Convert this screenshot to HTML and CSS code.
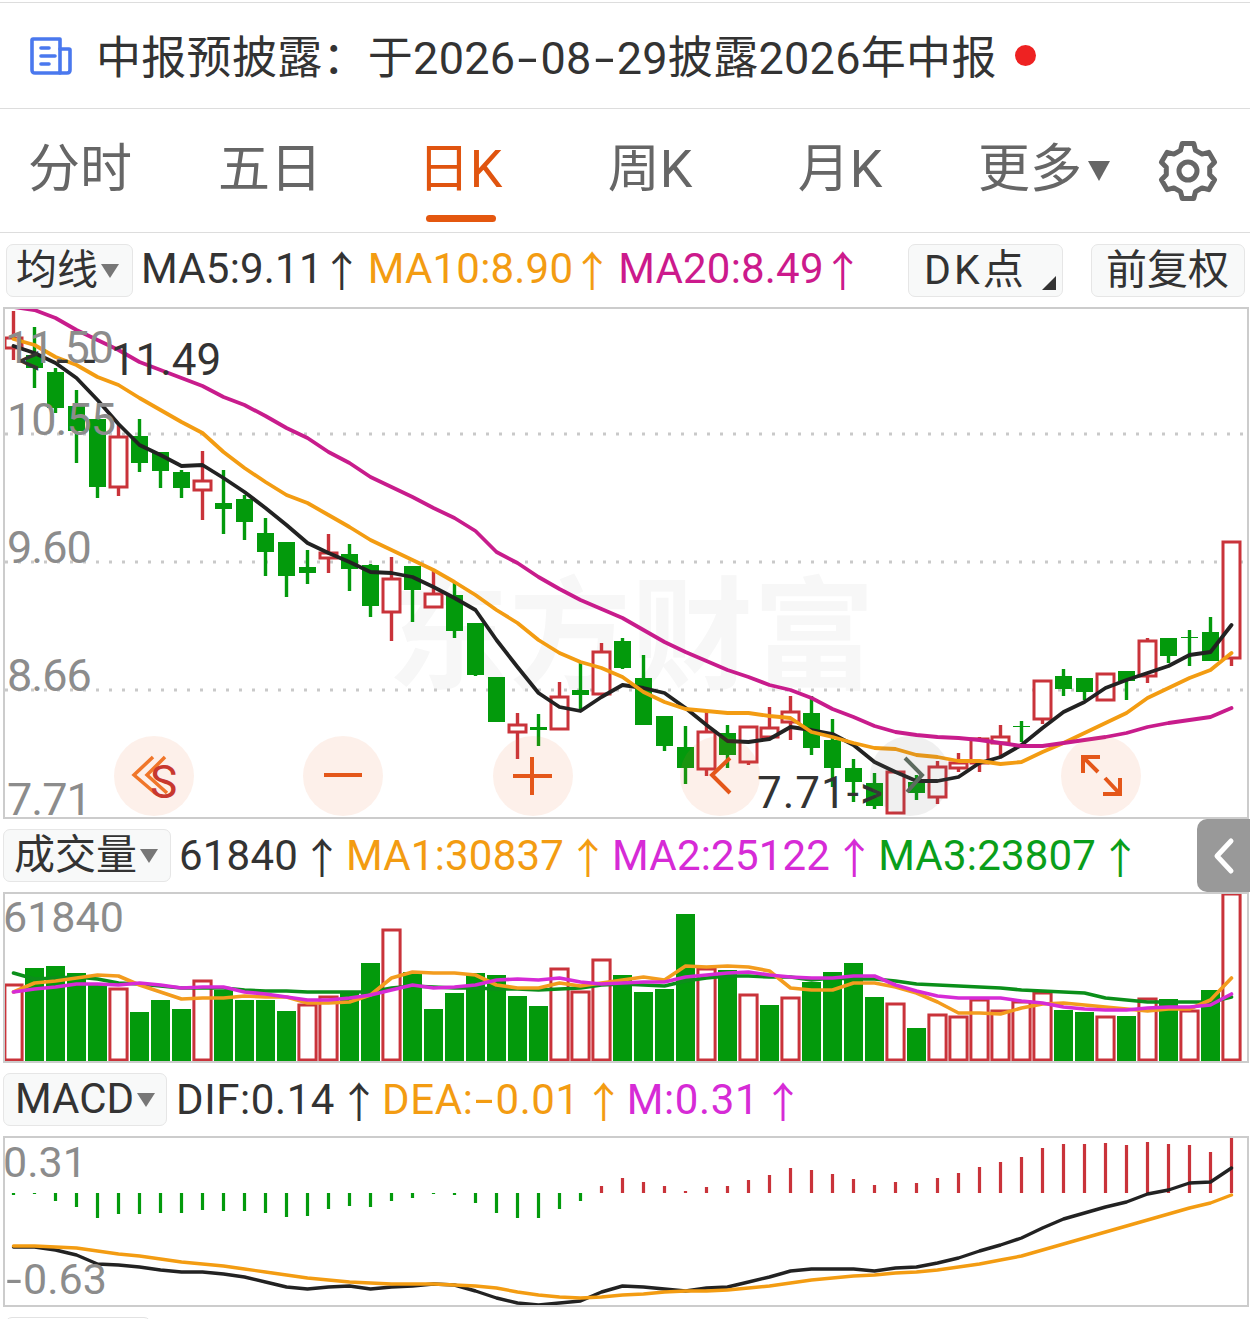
FILE: index.html
```html
<!DOCTYPE html>
<html lang="zh-CN">
<head>
  <meta charset="UTF-8">
  <meta name="viewport" content="width=device-width, initial-scale=1.0">
  <title>日K</title>
  <link rel="stylesheet" href="styles.css">
</head>
<body>
  <div class="notice">
    <svg class="doc-icon" viewBox="0 0 42 40" fill="none" stroke="#4a78ee" stroke-width="3.6" stroke-linejoin="round" stroke-linecap="round">
      <path d="M3 3 H30 V37 H5 Q2 37 2 34 V4 Q2 3 3 3 Z"/>
      <path d="M30 13 H39 Q40 13 40 14 V34 Q40 37 37 37 H30"/>
      <path d="M11 12 H19 M11 20 H25 M11 28 H19"/>
    </svg>
    <span class="notice-text">中报预披露：于2026<span class="dash">-</span>08<span class="dash">-</span>29披露2026年中报</span>
    <span class="red-dot"></span>
  </div>

  <div class="tabs">
    <div class="tab">分时</div>
    <div class="tab">五日</div>
    <div class="tab active">日K</div>
    <div class="tab">周K</div>
    <div class="tab">月K</div>
    <div class="tab tab-more">更多<span class="caret caret-big"></span></div>
    <svg class="gear" viewBox="0 0 60 60" fill="none" stroke="#666" stroke-width="5" stroke-linejoin="round">
      <polygon points="22.5,9.3 24.2,2.6 35.8,2.6 37.5,9.3 44.1,13.1 50.8,11.3 56.6,21.3 51.7,26.2 51.7,33.8 56.6,38.7 50.8,48.7 44.1,46.9 37.5,50.7 35.8,57.4 24.2,57.4 22.5,50.7 15.9,46.9 9.2,48.7 3.4,38.7 8.3,33.8 8.3,26.2 3.4,21.3 9.2,11.3 15.9,13.1"/>
      <circle cx="30" cy="30" r="9"/>
    </svg>
  </div>

  <div class="toolbar toolbar-k">
    <div class="btn btn-ma">均线<span class="caret"></span></div>
    <span class="val c-black">MA5:9.11<i class="up">↑</i></span>
    <span class="val c-orange">MA10:8.90<i class="up">↑</i></span>
    <span class="val c-rose">MA20:8.49<i class="up">↑</i></span>
    <div class="btn btn-dk">DK点<span class="corner"></span></div>
    <div class="btn btn-fq">前复权</div>
  </div>

  <div class="chart chart-k">
    <span class="watermark">东方财富</span>
    <svg id="kChart" class="plot" viewBox="5 309 1242 508"></svg>
    <span class="axis y-1150">11.50</span>
    <span class="axis y-1055">10.55</span>
    <span class="axis y-960">9.60</span>
    <span class="axis y-866">8.66</span>
    <span class="axis y-771">7.71</span>
    <span class="tip tip-high"><span class="tip-arrow">&lt;--</span>11.49</span>
    <span class="tip tip-low">7.71-&gt;</span>

    <div class="round round-s">
      <svg viewBox="0 0 80 80" fill="none" stroke="#f0762a" stroke-width="3.5">
        <path d="M39 21 L20 39 L41 57 M51 21 L33 39 L53 57"/>
      </svg>
      <span class="s-letter">S</span>
    </div>
    <div class="round round-minus">
      <svg viewBox="0 0 80 80" fill="none" stroke="#e4571a" stroke-width="4"><path d="M21 39 H59"/></svg>
    </div>
    <div class="round round-plus">
      <svg viewBox="0 0 80 80" fill="none" stroke="#e4571a" stroke-width="4"><path d="M20 40 H59 M39 21 V59"/></svg>
    </div>
    <div class="round round-left">
      <svg viewBox="0 0 80 80" fill="none" stroke="#e4571a" stroke-width="4"><path d="M50 22 L32 39 L50 57"/></svg>
    </div>
    <div class="round round-right off">
      <svg viewBox="0 0 80 80" fill="none" stroke="#5d6b60" stroke-width="4"><path d="M35 22 L52 39 L37 56"/></svg>
    </div>
    <div class="round round-expand">
      <svg viewBox="0 0 80 80" fill="none" stroke="#e4571a" stroke-width="4"><path d="M39 21 H22 V37 M22 21 L37 36 M59 42 V58 H42 M59 58 L44 42"/></svg>
    </div>
  </div>

  <div class="toolbar toolbar-vol">
    <div class="btn btn-vol">成交量<span class="caret"></span></div>
    <span class="val c-black">61840<i class="up">↑</i></span>
    <span class="val c-orange">MA1:30837<i class="up">↑</i></span>
    <span class="val c-purple">MA2:25122<i class="up">↑</i></span>
    <span class="val c-green">MA3:23807<i class="up">↑</i></span>
    <div class="collapse">
      <svg viewBox="0 0 30 40" fill="none" stroke="#fff" stroke-width="5" stroke-linecap="round" stroke-linejoin="round"><path d="M22 5 L8 20 L22 35"/></svg>
    </div>
  </div>

  <div class="chart chart-sub">
    <svg id="volChart" class="plot" viewBox="5 894 1242 167"></svg>
    <span class="axis a-vol">61840</span>
  </div>

  <div class="toolbar toolbar-macd">
    <div class="btn btn-macd">MACD<span class="caret"></span></div>
    <span class="val c-black">DIF:0.14<i class="up">↑</i></span>
    <span class="val c-orange">DEA:<span class="dash">-</span>0.01<i class="up">↑</i></span>
    <span class="val c-purple">M:0.31<i class="up">↑</i></span>
  </div>

  <div class="chart chart-sub">
    <svg id="macdChart" class="plot" viewBox="5 1138 1242 167"></svg>
    <span class="axis a-macd-top">0.31</span>
    <span class="axis a-macd-low"><span class="dash">-</span>0.63</span>
  </div>

  <div class="next-btn"></div>

  <script src="chart.js"></script>
</body>
</html>
```

FILE: styles.css
```css
* { box-sizing: border-box; }
html, body { margin: 0; padding: 0; background: #fff; }
body {
  width: 1250px;
  height: 1319px;
  overflow: hidden;
  font-family: Roboto, "Noto Sans CJK SC", sans-serif;
  color: #333;
}

/* notice row */
.notice {
  display: flex;
  align-items: center;
  height: 107px;
  margin-top: 2px;
  padding-left: 30px;
  border-top: 1px solid #ddd;
  border-bottom: 1px solid #ddd;
}
.doc-icon { width: 42px; height: 40px; flex: none; }
.notice-text { margin-left: 24px; padding-bottom: 2px; font-size: 45px; letter-spacing: 0.3px; color: #333; white-space: nowrap; }
.dash { display: inline-block; width: 25px; text-align: center; transform: scaleX(1.6); letter-spacing: 0; }
.red-dot { width: 21px; height: 21px; margin-left: 18px; border-radius: 50%; background: #ee2222; }

/* period tabs */
.tabs {
  display: flex;
  align-items: center;
  height: 124px;
  border-bottom: 1px solid #ddd;
  overflow: hidden;
}
.tab {
  position: relative;
  display: flex;
  flex: 0 0 190px;
  justify-content: center;
  align-items: center;
  height: 100%;
  padding-bottom: 12px;
  font-size: 52px;
  color: #666;
}
.tab:first-child { margin-left: -15px; }
.tab.active { color: #e0540f; }
.tab.active::after {
  content: "";
  position: absolute;
  left: 61px;
  top: 106px;
  width: 70px;
  height: 7px;
  border-radius: 4px;
  background: #e4570f;
}
.tab-more { justify-content: flex-start; padding-left: 43px; }
.gear { width: 60px; height: 60px; flex: none; margin-left: 33px; }

.caret {
  flex: none;
  width: 0;
  height: 0;
  border-left: 9px solid transparent;
  border-right: 9px solid transparent;
  border-top: 14px solid #777;
}
.caret-big {
  margin-left: 6px;
  margin-top: 12px;
  border-left-width: 11px;
  border-right-width: 11px;
  border-top-width: 20px;
  border-top-color: #666;
}

/* indicator rows */
.toolbar {
  position: relative;
  display: flex;
  align-items: center;
  height: 73px;
  white-space: nowrap;
}
.toolbar-k { height: 74px; padding: 0 5px 0 6px; }
.toolbar-vol, .toolbar-macd { padding-left: 3px; }
.btn {
  position: relative;
  display: flex;
  flex: none;
  align-items: center;
  height: 53px;
  padding-bottom: 9px;
  border: 1px solid #e6e6e6;
  border-radius: 7px;
  background: #f8f9f9;
  font-size: 41px;
  color: #333;
}
.btn .caret { margin-left: 3px; margin-top: 10px; }
.btn-ma { width: 127px; padding-left: 9px; margin-right: 8px; }
.btn-vol { width: 168px; padding-left: 10px; margin-right: 8px; }
.btn-macd { width: 164px; padding-left: 11px; padding-bottom: 3px; margin-right: 9px; font-size: 42px; }
.btn-macd .caret { margin-top: 4px; }
.btn-dk { width: 155px; margin-left: auto; padding-left: 15px; letter-spacing: 3px; }
.btn-fq { width: 154px; margin-left: 28px; padding-left: 14px; }
.corner {
  position: absolute;
  right: 6px;
  bottom: 6px;
  width: 0;
  height: 0;
  border-left: 14px solid transparent;
  border-bottom: 14px solid #333;
}

.val { display: inline-flex; flex: none; align-items: center; margin-right: 3px; font-size: 42px; letter-spacing: 0.2px; }
.up {
  display: inline-block;
  width: 42px;
  margin-left: 3px;
  font-style: normal;
  font-family: "Noto Sans CJK SC", sans-serif;
  font-size: 42px;
  line-height: 1;
  letter-spacing: 0;
}
.toolbar-k .val { margin-right: 5px; margin-bottom: 3px; }
.toolbar-k .up { margin-left: -2px; }
.toolbar-macd .val { margin-right: 2px; letter-spacing: 0.6px; }
.toolbar-macd .dash { width: 22px; }
.c-black { color: #333; }
.c-orange { color: #f39c12; }
.c-rose { color: #cc1a8c; }
.c-purple { color: #d62bd6; }
.c-green { color: #0a9e1a; }

.collapse {
  position: absolute;
  right: 0;
  top: 0;
  display: flex;
  align-items: center;
  justify-content: center;
  width: 53px;
  height: 73px;
  border-radius: 10px 0 0 10px;
  background: #999;
}
.collapse svg { width: 30px; height: 40px; }

/* charts */
.chart {
  position: relative;
  width: 1246px;
  margin-left: 3px;
  border: 2px solid #ccc;
}
.chart-k { height: 512px; }
.chart-sub { height: 171px; }
.plot { position: relative; display: block; width: 1242px; height: 100%; }

.watermark {
  position: absolute;
  left: 382px;
  top: 262px;
  font-size: 122px;
  font-weight: 700;
  line-height: 1.1;
  color: #f7f7f7;
  white-space: nowrap;
}
.axis {
  position: absolute;
  font-size: 45px;
  line-height: 1;
  letter-spacing: -1px;
  color: #8c8c8c;
}
.y-1150 { left: 0; top: 16px; }
.y-1055 { left: 2px; top: 88px; }
.y-960 { left: 2px; top: 216px; }
.y-866 { left: 2px; top: 344px; }
.y-771 { left: 2px; top: 474px; line-height: 34px; }
.a-vol { left: -2px; top: 2px; font-size: 43px; letter-spacing: 0; }
.a-macd-top { left: -2px; top: 3px; font-size: 43px; letter-spacing: 0; }
.a-macd-low { left: 0; top: 120px; font-size: 43px; letter-spacing: 0; }
.a-macd-low .dash { width: 18px; transform: scaleX(1.3); }

.tip {
  position: absolute;
  font-size: 44px;
  line-height: 1;
  color: #333;
  white-space: nowrap;
}
.tip-high { left: 14px; top: 29px; }
.tip-arrow { letter-spacing: 15px; }
.tip-low { left: 752px; top: 462px; letter-spacing: 1px; }

.round {
  position: absolute;
  top: 427px;
  width: 80px;
  height: 80px;
  border-radius: 50%;
  background: rgba(240, 110, 50, 0.1);
}
.round svg { display: block; width: 80px; height: 80px; }
.round.off { background: rgba(110, 110, 110, 0.1); }
.round-s { left: 109px; }
.round-minus { left: 298px; }
.round-plus { left: 488px; }
.round-left { left: 675px; }
.round-right { left: 865px; }
.round-expand { left: 1056px; }
.s-letter {
  position: absolute;
  left: 36px;
  top: 23px;
  font-size: 46px;
  line-height: 1;
  color: #c8382e;
}

.next-btn {
  width: 146px;
  height: 8px;
  margin: 10px 0 0 5px;
  border: 1px solid #e2e2e2;
  border-radius: 7px 7px 0 0;
}
```

FILE: chart.js
```js
// candle x positions: 21px apart from the left edge of the plot
const stepX = i => 13.5 + 21 * i;
const RED = "#c9333a";
const GREEN = "#039a0c";

// [high, bodyTop, bodyBottom, low, up?]
const candles = [
  [311, 338, 348, 360, 1], [327, 355, 368, 388, 0], [368, 372, 408, 413, 0], [390, 406, 431, 463, 0],
  [419, 419, 487, 498, 0], [425, 437, 487, 496, 1], [419, 436, 463, 472, 0], [452, 452, 471, 488, 0],
  [470, 472, 488, 498, 0], [451, 481, 490, 520, 1], [470, 503, 509, 534, 0], [495, 499, 522, 540, 0],
  [518, 533, 552, 576, 0], [542, 542, 576, 597, 0], [550, 567, 573, 584, 0], [534, 553, 558, 573, 1],
  [544, 554, 569, 591, 0], [564, 565, 606, 617, 0], [557, 579, 612, 641, 1], [566, 566, 590, 622, 0],
  [570, 594, 607, 607, 1], [582, 595, 631, 638, 0], [623, 623, 675, 676, 0], [677, 677, 722, 722, 0],
  [713, 725, 732, 759, 1], [714, 727, 730, 746, 0], [682, 697, 729, 729, 1], [663, 690, 695, 709, 0],
  [643, 652, 694, 694, 1], [638, 641, 668, 669, 0], [655, 678, 725, 725, 0], [716, 716, 746, 751, 0],
  [726, 747, 768, 784, 0], [710, 732, 769, 776, 1], [725, 733, 755, 768, 0], [727, 727, 762, 765, 1],
  [707, 728, 737, 737, 1], [696, 712, 722, 740, 1], [696, 713, 748, 755, 0], [719, 740, 768, 787, 0],
  [759, 768, 782, 802, 0], [773, 783, 806, 809, 0], [772, 772, 813, 813, 1], [775, 782, 793, 800, 0],
  [761, 767, 797, 804, 1], [753, 763, 768, 772, 1], [737, 739, 763, 772, 1], [725, 737, 743, 757, 1],
  [721, 726, 727, 742, 0], [681, 681, 719, 724, 1], [669, 676, 689, 696, 0], [678, 678, 692, 700, 0],
  [674, 674, 700, 701, 1], [671, 671, 681, 700, 0], [638, 641, 676, 683, 1], [638, 638, 656, 663, 0],
  [630, 637, 638, 666, 0], [617, 632, 661, 661, 0], [542, 542, 658, 666, 1]
];

const ma5 = [346, 353, 363, 378, 400, 424, 445, 455, 466, 465, 478, 492, 508, 525, 543, 553, 562, 572, 573, 577, 587, 598, 610, 640, 667, 693, 707, 711, 697, 685, 688, 693, 708, 725, 741, 742, 739, 727, 730, 734, 745, 762, 772, 781, 781, 777, 763, 757, 745, 728, 712, 702, 688, 680, 673, 666, 655, 652, 625];
const ma10 = [339, 345, 357, 365, 377, 385, 398, 410, 422, 433, 452, 468, 482, 495, 503, 515, 527, 540, 550, 560, 570, 582, 595, 610, 623, 640, 653, 662, 668, 677, 692, 702, 709, 711, 713, 713, 716, 718, 732, 737, 743, 748, 749, 755, 757, 761, 761, 764, 762, 752, 743, 733, 723, 713, 698, 688, 678, 670, 653];
const ma20 = [307, 310, 318, 330, 340, 350, 362, 370, 378, 386, 397, 405, 416, 428, 438, 452, 463, 477, 487, 497, 508, 518, 531, 552, 563, 577, 589, 600, 609, 618, 630, 642, 652, 661, 670, 677, 685, 690, 698, 709, 717, 726, 732, 735, 737, 738, 740, 743, 746, 746, 743, 740, 737, 733, 727, 723, 720, 717, 708];

const volTops = [985, 968, 966, 973, 985, 989, 1012, 1000, 1009, 981, 990, 1000, 1000, 1011, 1005, 997, 993, 963, 930, 972, 1009, 993, 973, 975, 996, 1006, 969, 992, 960, 975, 992, 989, 914, 969, 970, 995, 1005, 998, 982, 972, 963, 997, 1004, 1028, 1015, 1017, 1000, 1011, 1002, 993, 1010, 1012, 1017, 1016, 999, 999, 1011, 990, 894];
const volRed = [0, 5, 9, 14, 15, 18, 26, 27, 28, 33, 35, 37, 42, 44, 45, 46, 47, 48, 49, 52, 54, 56, 58];
const volMa1 = [992, 983, 981, 978, 975, 976, 985, 992, 999, 998, 998, 996, 997, 997, 1003, 1003, 1002, 995, 978, 972, 973, 973, 975, 985, 988, 988, 983, 986, 983, 980, 977, 980, 966, 967, 966, 967, 971, 988, 990, 990, 983, 983, 987, 993, 1002, 1013, 1013, 1014, 1008, 1004, 1003, 1005, 1007, 1009, 1011, 1009, 1009, 1000, 978];
const volMa2 = [992, 989, 987, 984, 984, 985, 983, 985, 988, 987, 987, 992, 994, 997, 1000, 1000, 998, 995, 990, 985, 988, 987, 985, 980, 979, 980, 978, 982, 984, 983, 982, 982, 977, 975, 973, 972, 975, 977, 978, 978, 976, 976, 985, 991, 996, 998, 998, 998, 1001, 1003, 1007, 1009, 1010, 1010, 1008, 1007, 1007, 1005, 994];
const volMa3 = [973, 979, 978, 977, 979, 983, 984, 986, 988, 988, 988, 990, 991, 991, 992, 992, 992, 992, 988, 986, 987, 988, 988, 989, 989, 990, 989, 988, 985, 984, 985, 986, 981, 978, 976, 976, 977, 977, 980, 978, 979, 979, 981, 984, 985, 986, 987, 988, 990, 991, 992, 993, 998, 1000, 1002, 1002, 1002, 1002, 997];

const macdBase = 1193;
const macdEnds = [1195, 1194, 1201, 1207, 1218, 1214, 1214, 1213, 1213, 1210, 1211, 1211, 1213, 1217, 1216, 1209, 1206, 1207, 1201, 1198, 1194, 1195, 1203, 1213, 1218, 1218, 1209, 1201, 1186, 1178, 1182, 1186, 1191, 1187, 1186, 1180, 1175, 1168, 1170, 1174, 1179, 1185, 1182, 1183, 1178, 1173, 1167, 1162, 1157, 1148, 1144, 1144, 1143, 1145, 1142, 1144, 1145, 1152, 1138];
const dif = [1247, 1247, 1250, 1255, 1264, 1265, 1267, 1270, 1272, 1272, 1274, 1277, 1282, 1287, 1289, 1287, 1286, 1289, 1287, 1286, 1284, 1285, 1291, 1298, 1303, 1305, 1303, 1301, 1292, 1286, 1287, 1289, 1291, 1288, 1287, 1282, 1277, 1271, 1269, 1269, 1269, 1271, 1268, 1267, 1263, 1258, 1251, 1245, 1238, 1228, 1219, 1213, 1207, 1202, 1194, 1190, 1183, 1182, 1168];
const dea = [1246, 1246, 1247, 1248, 1251, 1254, 1256, 1259, 1262, 1264, 1266, 1269, 1272, 1275, 1278, 1280, 1282, 1283, 1284, 1284, 1284, 1285, 1286, 1288, 1292, 1295, 1297, 1298, 1297, 1295, 1294, 1292, 1291, 1291, 1290, 1288, 1286, 1283, 1280, 1278, 1276, 1275, 1273, 1272, 1270, 1267, 1264, 1260, 1256, 1250, 1244, 1238, 1232, 1226, 1220, 1214, 1208, 1203, 1195];

function line(ys, color, width) {
  const pts = ys.map((y, i) => `${stepX(i)},${y}`).join(" ");
  return `<polyline points="${pts}" fill="none" stroke="${color}" stroke-width="${width}" stroke-linejoin="round" stroke-linecap="round"/>`;
}

function drawK() {
  let html = "";
  [434, 562, 690].forEach(y => {
    html += `<line x1="5" x2="1247" y1="${y}" y2="${y}" stroke="#c9c9c9" stroke-width="3" stroke-dasharray="3 10"/>`;
  });
  candles.forEach((c, i) => {
    const x = stepX(i);
    const color = c[4] ? RED : GREEN;
    html += `<line x1="${x}" x2="${x}" y1="${c[0]}" y2="${c[3]}" stroke="${color}" stroke-width="3.4"/>`;
    if (c[4]) {
      html += `<rect x="${x - 8.5}" y="${c[1]}" width="17" height="${c[2] - c[1]}" fill="#fff" stroke="${RED}" stroke-width="3"/>`;
    } else {
      html += `<rect x="${x - 8.5}" y="${c[1]}" width="17" height="${Math.max(c[2] - c[1], 1)}" fill="${GREEN}"/>`;
    }
  });
  html += line(ma5, "#222", 3.8) + line(ma10, "#f39c12", 3.8) + line(ma20, "#c81c8c", 3.8);
  document.getElementById("kChart").innerHTML = html;
}

function drawVol() {
  let html = "";
  volTops.forEach((top, i) => {
    const x = stepX(i);
    if (volRed.includes(i)) {
      html += `<rect x="${x - 8.6}" y="${top}" width="17.2" height="${1060 - top}" fill="#fff" stroke="${RED}" stroke-width="3"/>`;
    } else {
      html += `<rect x="${x - 9.5}" y="${top}" width="19" height="${1061 - top}" fill="${GREEN}"/>`;
    }
  });
  html += line(volMa3, "#0b8f1a", 3.6) + line(volMa1, "#f39c1e", 3.6) + line(volMa2, "#d62bd6", 3.6);
  document.getElementById("volChart").innerHTML = html;
}

function drawMacd() {
  let html = "";
  macdEnds.forEach((end, i) => {
    const x = stepX(i);
    const color = end < macdBase ? RED : GREEN;
    html += `<line x1="${x}" x2="${x}" y1="${macdBase}" y2="${end}" stroke="${color}" stroke-width="3.2"/>`;
  });
  html += line(dif, "#222", 3.4) + line(dea, "#f39c12", 3.4);
  document.getElementById("macdChart").innerHTML = html;
}

drawK();
drawVol();
drawMacd();
```
